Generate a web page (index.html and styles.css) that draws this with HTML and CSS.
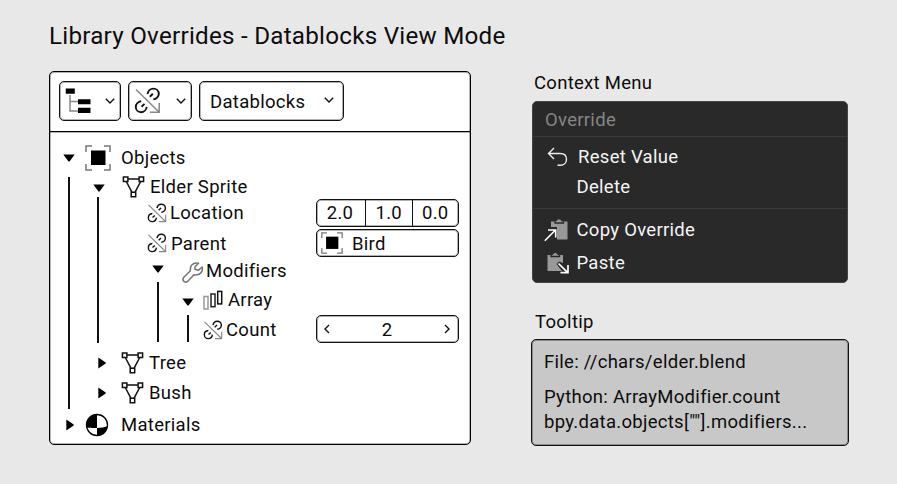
FILE: index.html
```html
<!DOCTYPE html>
<html lang="en">
<head>
<meta charset="utf-8">
<title>Library Overrides</title>
<link rel="stylesheet" href="styles.css">
</head>
<body>
<svg class="defs" width="0" height="0">
  <symbol id="open" viewBox="0 0 12 8"><path d="M.3 .4H11.7L6.5 7.6H5.500Z"/></symbol>
  <symbol id="closed" viewBox="0 0 8 12"><path d="M.3 .4L7.700 5.500V6.500L.3 11.600Z"/></symbol>
  <symbol id="chevron" viewBox="0 0 10 6"><path d="M.8 .8L5 5L9.200 .8" fill="none" stroke="#111" stroke-width="1.400"/></symbol>
  <symbol id="object" viewBox="0 0 26 26">
    <path d="M1 7V1H7M19 1H25V7M25 19V25H19M7 25H1V19" fill="none" stroke="#777" stroke-width="1.500"/>
    <rect x="6" y="5.500" width="14.500" height="14.500"/>
  </symbol>
  <symbol id="mesh" viewBox="0 0 22 22">
    <g fill="none" stroke="#111" stroke-width="1.500"><path d="M5.500 3H16.500M3.800 5.500L9.400 16.200M18.200 5.500L12.600 16.200"/><path d="M.9 .9H5.400V5.400H.9ZM16.600 .9H21.100V5.400H16.600ZM8.700 16.300H13.200V20.800H8.700Z"/></g>
  </symbol>
  <symbol id="unlink" viewBox="0 0 27 27">
    <path d="M2 2.500L25 25M25.200 16V25.200H16" fill="none" stroke="#888" stroke-width="1.500"/>
    <g fill="none" stroke="#111" stroke-width="1.900">
      <path d="M13.500 7C14 4 16.500 1.600 19.300 1.600C22.500 1.600 24.800 4 24.800 7C24.800 9.700 22.300 12.200 19.300 12.400M15.800 9.700L18.900 6.800"/>
      <path d="M7.200 14.200C4.200 14.600 1.800 17.100 1.800 19.900C1.800 22.900 4.100 25.200 7 25.200C9.900 25.200 12.300 22.700 12.700 19.800M7.500 19.700L10.500 16.900"/>
    </g>
  </symbol>
</svg>
<main class="page">
  <h1 class="title">Library Overrides - Datablocks View Mode</h1>
  <div class="columns">
    <section class="outliner">
      <header class="toolbar">
        <button class="btn btn-display">
          <svg width="27" height="27" viewBox="0 0 27 27"><path d="M5 7V23H13M5 13.500H13" fill="none" stroke="#888" stroke-width="1.500"/><path d="M.8 .5H9.800V5.700H.8ZM13 11.200H25.500V16.200H13ZM13 19.800H25.500V25H13Z"/></svg>
          <svg class="chev" width="10" height="6"><use href="#chevron"/></svg>
        </button>
        <button class="btn btn-link">
          <svg width="27" height="27"><use href="#unlink"/></svg>
          <svg class="chev" width="10" height="6"><use href="#chevron"/></svg>
        </button>
        <button class="btn btn-mode"><span>Datablocks</span><svg class="chev" width="10" height="6"><use href="#chevron"/></svg></button>
      </header>
      <div class="tree">
        <div class="row row-root">
          <svg class="arrow" width="12" height="8"><use href="#open"/></svg>
          <svg class="icon" width="26" height="26"><use href="#object"/></svg><span>Objects</span>
        </div>
        <div class="branch">
          <i class="guide guide-objects"></i>
          <div class="items">
            <div class="row row-id row-elder">
              <svg class="arrow" width="12" height="8"><use href="#open"/></svg>
              <svg class="icon" width="23" height="22"><use href="#mesh"/></svg><span>Elder Sprite</span>
            </div>
            <div class="branch">
              <i class="guide guide-elder"></i>
              <div class="items">
                <div class="row row-prop row-location">
                  <svg class="icon" width="20" height="20"><use href="#unlink"/></svg><span>Location</span>
                  <div class="field vector"><span>2.0</span><span>1.0</span><span>0.0</span></div>
                </div>
                <div class="row row-prop row-parent">
                  <svg class="icon" width="20" height="20"><use href="#unlink"/></svg><span>Parent</span>
                  <div class="field pointer"><svg width="22" height="22"><use href="#object"/></svg><span>Bird</span></div>
                </div>
                <div class="row row-mods">
                  <svg class="arrow" width="12" height="8"><use href="#open"/></svg>
                  <svg class="icon" width="22" height="21" viewBox="0 0 22 21"><path d="M16.500 1.300C13.500 .3 10 1.500 8.800 4.500C8.300 6 8.500 7.800 8.200 9L1.800 15.300C.5 16.800 .9 18.700 2.200 19.600C3.400 20.400 4.800 20.200 5.800 19.200L12 12.800C14.500 13.200 17.500 12.900 19.200 10.600C20.600 8.800 20.600 6.800 20.100 5L16.300 8.300L13 7.300V4.700Z" fill="none" stroke="#777" stroke-width="1.600" stroke-linejoin="round"/></svg><span>Modifiers</span>
                </div>
                <div class="branch branch-mods">
                  <i class="guide guide-mods"></i>
                  <div class="items">
                    <div class="row row-array">
                      <svg class="arrow" width="12" height="8"><use href="#open"/></svg>
                      <svg class="icon" width="20" height="20" viewBox="0 0 20 20"><g fill="none" stroke-width="1.500"><rect x="1" y="6.500" width="4" height="12.500" stroke="#999"/><rect x="8" y="4" width="4" height="12.700" stroke="#222"/><rect x="14.700" y="1.400" width="4" height="12.500" stroke="#111"/></g></svg><span>Array</span>
                    </div>
                    <div class="branch">
                      <i class="guide guide-array"></i>
                      <div class="items">
                        <div class="row row-count">
                          <svg class="icon" width="20" height="20"><use href="#unlink"/></svg><span>Count</span>
                          <div class="field stepper">
                            <svg width="6" height="10" viewBox="0 0 6 10"><path d="M5 1L1 5L5 9" fill="none" stroke="#111" stroke-width="1.400"/></svg><span>2</span><svg width="6" height="10" viewBox="0 0 6 10"><path d="M1 1L5 5L1 9" fill="none" stroke="#111" stroke-width="1.400"/></svg>
                          </div>
                        </div>
                      </div>
                    </div>
                  </div>
                </div>
              </div>
            </div>
            <div class="row row-id row-tree">
              <svg class="arrow" width="8" height="12"><use href="#closed"/></svg>
              <svg class="icon" width="23" height="22"><use href="#mesh"/></svg><span>Tree</span>
            </div>
            <div class="row row-id row-bush">
              <svg class="arrow" width="8" height="12"><use href="#closed"/></svg>
              <svg class="icon" width="23" height="22"><use href="#mesh"/></svg><span>Bush</span>
            </div>
          </div>
        </div>
        <div class="row row-root row-materials">
          <svg class="arrow" width="8" height="12"><use href="#closed"/></svg>
          <svg class="icon" width="24" height="24" viewBox="0 0 24 24"><circle cx="12" cy="12" r="10.500" fill="#fff" stroke="#000" stroke-width="1.300"/><path d="M12 1.200A10.800 10.800 0 0 0 1.700 14.500Q6 15.200 12 14.900ZM12 14.900Q18 14.800 22.400 13.200A10.700 10.700 0 0 1 12 22.800Z"/></svg><span>Materials</span>
        </div>
      </div>
    </section>
    <aside class="side">
      <h2 class="heading">Context Menu</h2>
      <div class="menu">
        <div class="menu-title">Override</div>
        <div class="menu-group">
          <div class="item item-reset"><svg width="22" height="20" viewBox="0 0 22 20"><path d="M7 1L1.500 6.500L7 12M1.500 6.500H13C17 6.500 19.500 8.800 19.500 12.200C19.500 15.700 17 18.300 13.300 18.300H10.500" fill="none" stroke="#eee" stroke-width="1.400"/></svg><span>Reset Value</span></div>
          <div class="item item-delete"><span>Delete</span></div>
        </div>
        <div class="menu-group">
          <div class="item item-copy"><svg width="24" height="23" viewBox="0 0 24 23"><path d="M7 2.500H12L14 .5H16L18 2.500H23.500V20.500H13V8H7Z" fill="#999"/><path d="M11 2.500V4H19.500V2.500" fill="none" stroke="#282828" stroke-width="1.300"/><path d="M.8 21.800L11.500 11M4 11H11.700V18.500" fill="none" stroke="#fff" stroke-width="1.600"/></svg><span>Copy Override</span></div>
          <div class="item item-paste"><svg width="22" height="22" viewBox="0 0 22 22"><path d="M.5 3H5.500L7.500 1H9L11 3H16V11L12 9.500L9.500 12L15 19H.5Z" fill="#999"/><path d="M4 3V4.500H12.500V3" fill="none" stroke="#282828" stroke-width="1.300"/><path d="M11.500 11.500L20.500 20.300M21 13V20.700H13.500" fill="none" stroke="#fff" stroke-width="1.700"/></svg><span>Paste</span></div>
        </div>
      </div>
      <h2 class="heading heading-tip">Tooltip</h2>
      <div class="tooltip">
        <p>File: //chars/elder.blend</p>
        <p>Python: ArrayModifier.count</p>
        <p>bpy.data.objects[""].modifiers...</p>
      </div>
    </aside>
  </div>
</main>
</body>
</html>
```
FILE: styles.css
```css
* { box-sizing: border-box; }
body { margin: 0; width: 897px; height: 484px; overflow: hidden; background: #e8e8e8; color: #0c0c0c; font: 18.5px/24px Roboto, sans-serif; letter-spacing: .29px; }
svg { display: block; flex: none; }
.defs { position: absolute; }
.page { padding: 20px 48px 0 49px; }
.title { margin: 0; height: 51px; font-size: 24.2px; line-height: 32px; font-weight: 400; letter-spacing: .25px; white-space: nowrap; }
.columns { display: flex; justify-content: space-between; }

.outliner { width: 422px; height: 374px; background: #fff; border: 1px solid #000; border-radius: 5px; box-shadow: inset 0 0 0 1px rgba(0, 0, 0, .3); }
.toolbar { display: flex; gap: 7px; height: 60px; padding: 9px 0 0 9px; border-bottom: 1px solid #000; box-shadow: 0 1px 0 rgba(0, 0, 0, .3); }
.btn { display: flex; align-items: center; justify-content: space-between; height: 40px; margin: 0; padding: 0; background: #fff; border: 1px solid #111; border-radius: 5px; box-shadow: inset 0 0 0 1px rgba(0, 0, 0, .3); color: inherit; font: inherit; letter-spacing: inherit; }
.btn-display { width: 62px; padding: 0 5px 0 5px; }
.btn-link { width: 64px; padding: 0 5px 1px 5px; }
.btn-mode { width: 145px; padding: 0 9px 0 10px; }
.btn-mode span { padding-top: 2px; }
.btn-mode .chev { margin-bottom: 3px; }

.tree { padding-top: 13px; }
.row { display: flex; align-items: center; height: 26px; white-space: nowrap; }
.branch { display: flex; }
.items { flex: 1; }
.guide { flex: none; width: 2px; background: #111; }

.row-root { padding-left: 13px; }
.row-root .icon { margin: 0 10px 0 10px; }
.guide-objects { height: 232px; margin: 6px 22px 0 18px; }
.row-id { height: 29px; }
.row-id .arrow { margin-top: 3px; }
.row-id .icon { margin: 0 5px 0 17px; }
.row-elder { padding: 2px 0 0 1px; }
.guide-elder { height: 146px; margin: -3px 48px 0 5px; }
.row-prop { height: 28px; }
.row-prop .icon { margin-right: 3px; }
.row-location { margin-top: -1px; }
.row-parent { margin-top: 2px; }
.row-parent .icon { margin-right: 4px; }
.row-parent span { padding-top: 1px; }
.row-mods { margin-top: 1px; padding-left: 5px; }
.row-mods .arrow { margin-bottom: 4px; }
.row-mods .icon { margin: 2px 2px 0 18px; }
.branch-mods { margin-top: 3px; }
.guide-mods { height: 60px; margin: -5px 23px 0 10px; }
.row-array .arrow { margin-top: 4px; }
.row-array .icon { margin: 0 5px 0 9px; }
.guide-array { height: 27px; margin: 2px 14px 0 5px; }
.row-count { height: 28px; margin-top: 2px; }
.row-count .icon { margin: 1px 3px 0 0; }
.row-count span { padding-top: 2px; }
.row-tree { height: 26px; margin-top: 7px; padding-left: 6px; }
.row-bush { height: 26px; margin-top: 4px; padding-left: 6px; }
.row-tree .arrow, .row-bush .arrow { margin-top: 0; }
.row-tree .icon, .row-bush .icon { margin-left: 15px; }
.row-materials { margin-top: 3px; padding-left: 16px; }
.row-materials .icon { margin: 0 12px 0 11px; }

.field { display: flex; align-items: center; width: 143px; height: 28px; margin: 0 11px 0 auto; border: 1px solid #111; border-radius: 5px; box-shadow: inset 0 0 0 1px rgba(0, 0, 0, .3); }
.vector span { flex: 1; height: 26px; line-height: 27px; text-align: center; border-left: 1px solid #111; }
.vector span:first-child { flex: 0 0 48px; padding-right: 2px; border-left: 0; }
.pointer { gap: 9px; padding-left: 4px; }
.stepper { justify-content: space-between; padding: 0 8px 0 7px; }

.side { width: 318px; }
.heading { margin: 0 0 0 3px; height: 30px; font-size: 18.5px; line-height: 24px; font-weight: 400; }
.menu { width: 316px; height: 182px; margin-left: 1px; background: #292929; color: #f5f5f5; border: 1px solid #444; border-radius: 5px; }
.menu-title { height: 34px; padding: 6px 0 0 12px; color: #858585; }
.menu-group { height: 72px; border-top: 1px solid #393939; }
.item { display: flex; align-items: center; height: 30px; padding-left: 14px; }
.item-reset { gap: 9px; height: 31px; padding-top: 8px; }
.item-delete { padding-left: 43.5px; padding-top: 7px; }
.item-copy { height: 36px; padding: 6px 0 0 10.5px; gap: 9px; }
.item-paste { height: 33px; gap: 7.5px; padding-top: 2px; }
.heading-tip { height: 29px; margin: 27px 0 0 4px; }
.tooltip { height: 107px; padding: 10px 12px; background: #c8c8c8; border: 1px solid #111; border-radius: 5px; box-shadow: inset 0 0 0 1px rgba(0, 0, 0, .3); white-space: nowrap; }
.tooltip p { margin: 0; height: 25px; }
.tooltip p:first-child { margin-bottom: 10px; }
```
